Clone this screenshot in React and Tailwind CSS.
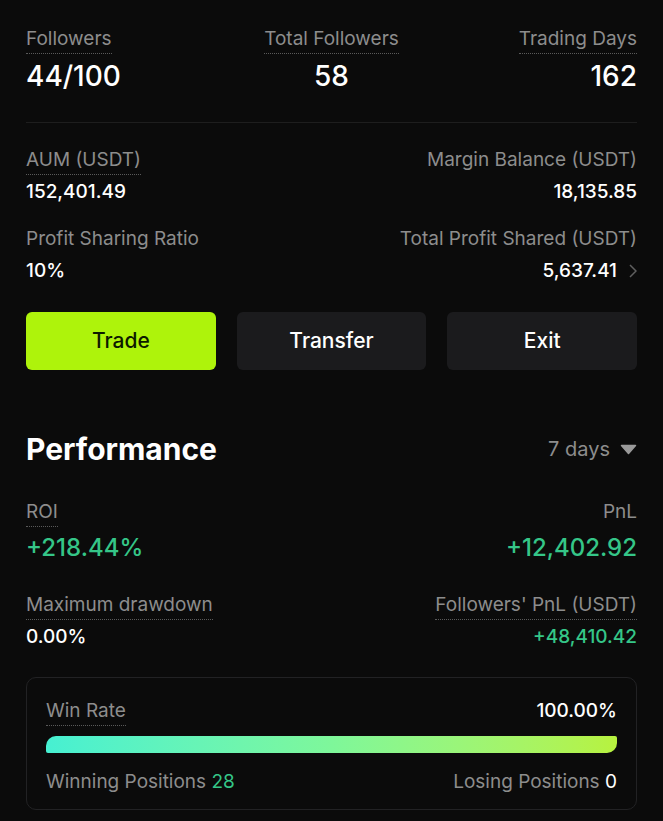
import React from "react";

const font = { fontFamily: "Inter, 'Noto Sans', sans-serif" };

function Label({ children, dotted = true, className = "" }) {
  return (
    <span
      className={
        "text-[19px] leading-[22px] text-[#8d8d8d] pb-[3px] border-b border-dotted " +
        (dotted ? "border-[#5a5a5a] " : "border-transparent ") +
        className
      }
    >
      {children}
    </span>
  );
}

function Stat({ label, value, align = "left", dotted = false, valueClass = "text-white", chevron = false }) {
  return (
    <div className={"flex flex-col " + (align === "right" ? "items-end" : "items-start")}>
      <Label dotted={dotted}>{label}</Label>
      <div className={"mt-[5px] flex items-center text-[19px] leading-[24px] font-medium " + valueClass}>
        {value}
        {chevron && (
          <svg className="ml-[12px]" width="8" height="14" viewBox="0 0 8 14" fill="none">
            <path d="M1 1l6 6-6 6" stroke="#5f5f5f" strokeWidth="1.5" />
          </svg>
        )}
      </div>
    </div>
  );
}

export default function App() {
  return (
    <div className="min-h-screen w-[663px] bg-[#0b0b0b] text-white px-[26px] pt-[28px]" style={font}>
      {/* header stats */}
      <div className="grid grid-cols-3">
        <div className="flex flex-col items-start">
          <Label>Followers</Label>
          <div className="mt-[6px] text-[28px] leading-[32px] font-medium">44/100</div>
        </div>
        <div className="flex flex-col items-center">
          <Label>Total Followers</Label>
          <div className="mt-[6px] text-[28px] leading-[32px] font-medium">58</div>
        </div>
        <div className="flex flex-col items-end">
          <Label>Trading Days</Label>
          <div className="mt-[6px] text-[28px] leading-[32px] font-medium">162</div>
        </div>
      </div>

      <div className="mt-[30px] h-px bg-[#1e1e1e]" />

      <div className="mt-[26px] flex justify-between">
        <Stat label="AUM (USDT)" value="152,401.49" dotted />
        <Stat label="Margin Balance (USDT)" value="18,135.85" align="right" />
      </div>
      <div className="mt-[24px] flex justify-between">
        <Stat label="Profit Sharing Ratio" value="10%" />
        <Stat label="Total Profit Shared (USDT)" value="5,637.41" align="right" chevron />
      </div>

      <div className="mt-[29px] flex gap-[21px]">
        <button className="flex-1 h-[58px] rounded-[6px] bg-[#aef30b] text-[#0d1a00] text-[21px] font-medium">Trade</button>
        <button className="flex-1 h-[58px] rounded-[6px] bg-[#1b1b1d] text-white text-[21px] font-medium">Transfer</button>
        <button className="flex-1 h-[58px] rounded-[6px] bg-[#1b1b1d] text-white text-[21px] font-medium">Exit</button>
      </div>

      <div className="mt-[61px] flex items-center justify-between">
        <h2 className="text-[30px] leading-[36px] font-bold">Performance</h2>
        <div className="flex items-center text-[20px] text-[#8d8d8d]">
          7 days
          <svg className="ml-[10px]" width="17" height="11" viewBox="0 0 17 11">
            <path d="M1.5 1.5h14l-7 8z" fill="#9a9a9a" stroke="#9a9a9a" strokeLinejoin="round" strokeWidth="1.5" />
          </svg>
        </div>
      </div>

      <div className="mt-[34px] flex justify-between">
        <div className="flex flex-col items-start">
          <Label>ROI</Label>
          <div className="mt-[7px] text-[24px] leading-[28px] font-medium text-[#35c688]">+218.44%</div>
        </div>
        <div className="flex flex-col items-end">
          <Label dotted={false}>PnL</Label>
          <div className="mt-[7px] text-[24px] leading-[28px] font-medium text-[#35c688]">+12,402.92</div>
        </div>
      </div>

      <div className="mt-[32px] flex justify-between">
        <Stat label="Maximum drawdown" value="0.00%" dotted />
        <Stat label="Followers' PnL (USDT)" value="+48,410.42" align="right" dotted valueClass="text-[#35c688]" />
      </div>

      <div className="mt-[28px] rounded-[10px] border border-[#222224] px-[19px] pt-[22px] pb-[16px]">
        <div className="flex items-start justify-between">
          <Label>Win Rate</Label>
          <span className="text-[19px] leading-[22px] font-medium">100.00%</span>
        </div>
        <div className="mt-[10px] h-[17px] rounded-tl-[10px] rounded-br-[10px] rounded-tr-[2px] rounded-bl-[2px] bg-gradient-to-r from-[#46f0d2] via-[#7ef79a] to-[#b7f23e]" />
        <div className="mt-[18px] flex justify-between text-[19px] leading-[22px]">
          <span className="text-[#8d8d8d]">
            Winning Positions <span className="text-[#35c688]">28</span>
          </span>
          <span className="text-[#8d8d8d]">
            Losing Positions <span className="text-white">0</span>
          </span>
        </div>
      </div>
    </div>
  );
}
